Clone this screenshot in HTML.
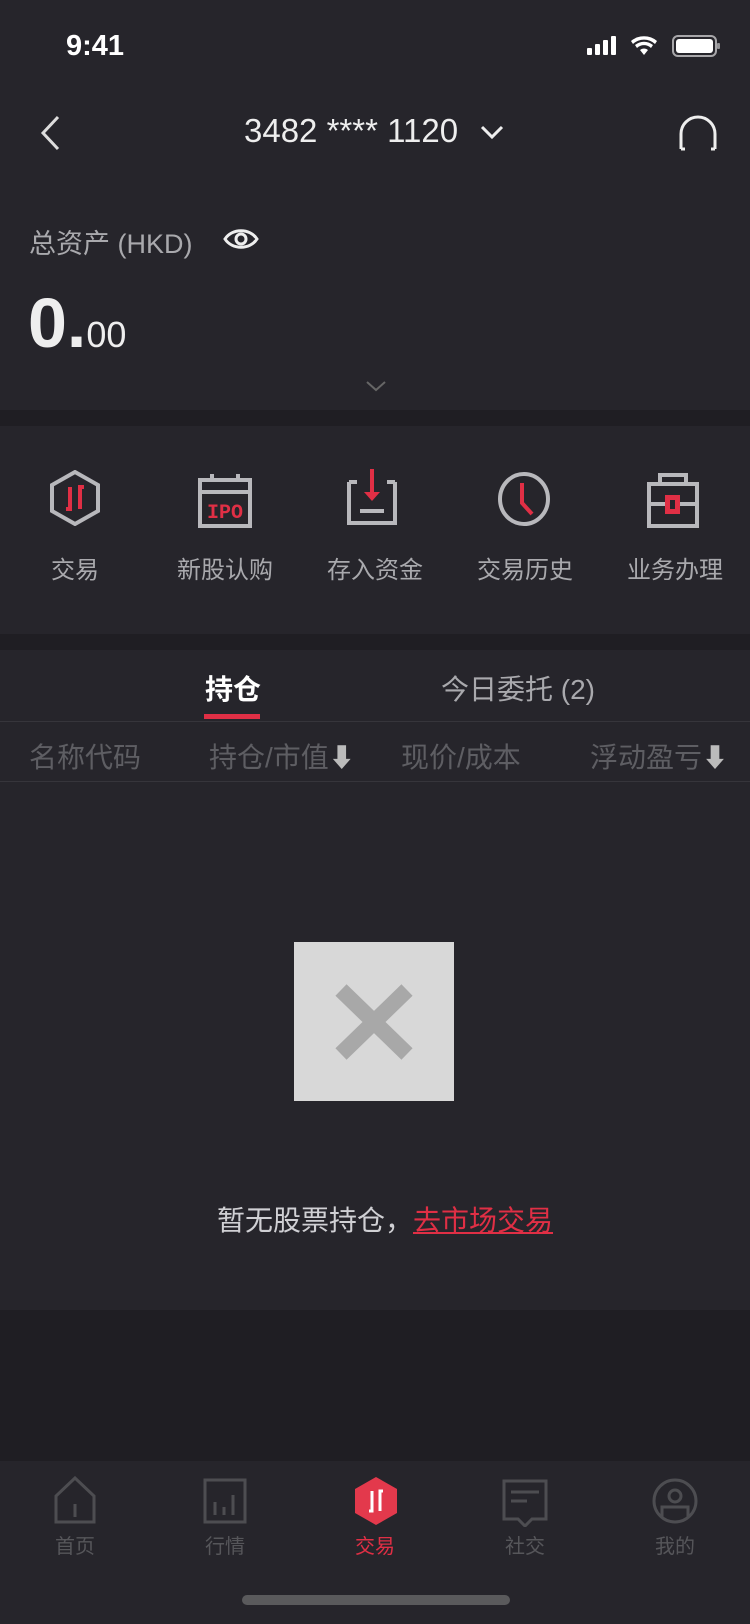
<!DOCTYPE html>
<html><head><meta charset="utf-8"><style>
*{margin:0;padding:0;box-sizing:border-box}
body{width:750px;height:1624px;background:#1f1e23;font-family:"Liberation Sans","Noto Sans CJK SC",sans-serif;position:relative;overflow:hidden;color:#ddd}
.a{position:absolute}
.panel{background:#26252b;position:absolute;left:0;width:750px}
.lbl{position:absolute;width:150px;text-align:center;font-size:24px;color:#a9a9ad}
.tl{position:absolute;width:150px;text-align:center;font-size:20px;color:#56565a}
</style></head><body>
<div class="panel" style="top:0;height:410px"></div>
<div class="panel" style="top:426px;height:208px"></div>
<div class="panel" style="top:650px;height:660px"></div>
<div class="panel" style="top:1461px;height:163px"></div>

<div class="a" style="left:66px;top:30px;font-size:29px;font-weight:bold;color:#fff">9:41</div>
<svg class="a" style="left:585px;top:34px" width="135" height="26">
<rect x="2" y="14" width="5" height="7" rx="1" fill="#fff"/><rect x="10" y="10" width="5" height="11" rx="1" fill="#fff"/><rect x="18" y="6" width="5" height="15" rx="1" fill="#fff"/><rect x="26" y="2" width="5" height="19" rx="1" fill="#fff"/>
<g transform="translate(12,0)"><path d="M47 21l4-5a6 6 0 0 0-8 0z M38 11a14 14 0 0 1 18 0l-2 3a10 10 0 0 0-14 0z M34 7a20 20 0 0 1 26 0l-2 3a16 16 0 0 0-22 0z" fill="#fff"/></g>
<rect x="88" y="2" width="43" height="20" rx="5" fill="none" stroke="#fff" stroke-width="2" opacity=".6"/><rect x="91" y="5" width="37" height="14" rx="3" fill="#fff"/><rect x="132" y="9" width="3" height="6" rx="1" fill="#fff" opacity=".5"/>
</svg>

<svg class="a" style="left:36px;top:114px" width="28" height="38"><path d="M22 3L7 19l15 16" fill="none" stroke="#ddd" stroke-width="3"/></svg>
<div class="a" style="left:244px;top:112px;font-size:33px;color:#eee">3482 **** 1120</div>
<svg class="a" style="left:480px;top:124px" width="24" height="16"><path d="M2 3l10 10 10-10" fill="none" stroke="#eee" stroke-width="3"/></svg>
<svg class="a" style="left:676px;top:113px" width="44" height="40"><path d="M5 36V21a17 17 0 0 1 34 0v15" fill="none" stroke="#eee" stroke-width="3"/><path d="M5 36h4 M39 36h-4" stroke="#eee" stroke-width="3"/></svg>

<div class="a" style="left:29px;top:222px;font-size:27px;color:#a9a9ad">总资产 (HKD)</div>
<svg class="a" style="left:222px;top:224px" width="38" height="30"><path d="M3 15C10 4 28 4 35 15C28 26 10 26 3 15z" fill="none" stroke="#eee" stroke-width="3"/><circle cx="19" cy="15" r="5" fill="none" stroke="#eee" stroke-width="3"/></svg>
<div class="a" style="left:28px;top:283px;color:#eee"><span style="font-size:70px;font-weight:bold">0.</span><span style="font-size:36px">00</span></div>
<svg class="a" style="left:365px;top:380px" width="22" height="12"><path d="M2 2l9 8 9-8" fill="none" stroke="#666" stroke-width="2"/></svg>

<svg class="a" style="left:49px;top:470px" width="52" height="56"><path d="M26 2L49 15v26L26 54 3 41V15z" fill="none" stroke="#b8b8bc" stroke-width="4"/><path d="M21 17v22h-4M31 39V17h4" fill="none" stroke="#e02f45" stroke-width="4"/></svg>
<svg class="a" style="left:198px;top:472px" width="54" height="56"><rect x="2" y="8" width="50" height="46" fill="none" stroke="#b8b8bc" stroke-width="4"/><path d="M2 20h50M14 2v8M40 2v8" stroke="#b8b8bc" stroke-width="4"/><text x="27" y="46" text-anchor="middle" font-size="20" font-weight="bold" fill="#e02f45" font-family="Liberation Mono">IPO</text></svg>
<svg class="a" style="left:345px;top:467px" width="54" height="60"><path d="M4 15v41h46V15" fill="none" stroke="#b8b8bc" stroke-width="4"/><path d="M4 15h8M50 15h-8M15 44h24" stroke="#b8b8bc" stroke-width="4"/><path d="M27 2v26" stroke="#e02f45" stroke-width="4"/><path d="M19 25h16l-8 9z" fill="#e02f45"/></svg>
<svg class="a" style="left:497px;top:471px" width="54" height="56"><ellipse cx="27" cy="28" rx="24" ry="25" fill="none" stroke="#b8b8bc" stroke-width="4"/><path d="M25 12v20l10 11" fill="none" stroke="#e02f45" stroke-width="4"/></svg>
<svg class="a" style="left:646px;top:472px" width="54" height="56"><rect x="3" y="12" width="48" height="42" fill="none" stroke="#b8b8bc" stroke-width="4"/><path d="M14 12V3h26v9M3 32h48" fill="none" stroke="#b8b8bc" stroke-width="4"/><rect x="19" y="23" width="15" height="19" fill="#e02f45"/><rect x="24" y="28" width="5" height="9" fill="#26252b"/></svg>
<div class="lbl" style="left:0;top:550px">交易</div>
<div class="lbl" style="left:150px;top:550px">新股认购</div>
<div class="lbl" style="left:300px;top:550px">存入资金</div>
<div class="lbl" style="left:450px;top:550px">交易历史</div>
<div class="lbl" style="left:600px;top:550px">业务办理</div>

<div class="a" style="left:205px;top:668px;font-size:28px;font-weight:bold;color:#fff">持仓</div>
<div class="a" style="left:204px;top:714px;width:56px;height:5px;background:#e02f45"></div>
<div class="a" style="left:441px;top:668px;font-size:28px;color:#a9a9ad">今日委托 (2)</div>
<div class="a" style="left:0;top:721px;width:750px;height:1px;background:#36353b"></div>
<div class="a" style="left:29px;top:736px;font-size:28px;color:#5e5e63">名称代码</div>
<div class="a" style="left:209px;top:736px;font-size:28px;color:#5e5e63">持仓/市值<span style="color:#bbb;font-size:26px">⬇</span></div>
<div class="a" style="left:401px;top:736px;font-size:28px;color:#5e5e63">现价/成本</div>
<div class="a" style="left:590px;top:736px;font-size:28px;color:#5e5e63">浮动盈亏<span style="color:#bbb;font-size:26px">⬇</span></div>
<div class="a" style="left:0;top:781px;width:750px;height:1px;background:#36353b"></div>

<div class="a" style="left:294px;top:942px;width:160px;height:159px;background:#d8d8d8"></div>
<svg class="a" style="left:333px;top:982px" width="82" height="80"><path d="M8 8l66 64M74 8L8 72" stroke="#a8a8a8" stroke-width="16"/></svg>
<div class="a" style="left:10px;top:1199px;width:750px;text-align:center;font-size:28px;color:#d0d0d4">暂无股票持仓，<span style="color:#e02f45;text-decoration:underline">去市场交易</span></div>

<svg class="a" style="left:54px;top:1476px" width="42" height="48"><path d="M2 46V20L21 2l19 18v26z" fill="none" stroke="#4d4d51" stroke-width="3"/><path d="M21 28v13" stroke="#4d4d51" stroke-width="3"/></svg>
<svg class="a" style="left:203px;top:1478px" width="44" height="46"><rect x="2" y="2" width="40" height="42" fill="none" stroke="#4d4d51" stroke-width="3"/><path d="M12 24v13M21 29v8M30 17v20" stroke="#4d4d51" stroke-width="3"/></svg>
<svg class="a" style="left:354px;top:1476px" width="44" height="50"><path d="M22 1l21 12v24L22 49 1 37V13z" fill="#e3394c"/><path d="M18 15v20h-3M26 35V15h3" fill="none" stroke="#fff" stroke-width="3"/></svg>
<svg class="a" style="left:502px;top:1479px" width="46" height="48"><path d="M2 2h42v38H30l-7 7-7-7H2z" fill="none" stroke="#4d4d51" stroke-width="3"/><path d="M9 13h28M9 22h16" stroke="#4d4d51" stroke-width="3"/></svg>
<svg class="a" style="left:652px;top:1478px" width="46" height="46"><circle cx="23" cy="23" r="21" fill="none" stroke="#4d4d51" stroke-width="3"/><circle cx="23" cy="18" r="6" fill="none" stroke="#4d4d51" stroke-width="3"/><path d="M10 40V29h26v11" fill="none" stroke="#4d4d51" stroke-width="3"/></svg>
<div class="tl" style="left:0;top:1530px">首页</div>
<div class="tl" style="left:150px;top:1530px">行情</div>
<div class="tl" style="left:300px;top:1530px;color:#e02f45">交易</div>
<div class="tl" style="left:450px;top:1530px">社交</div>
<div class="tl" style="left:600px;top:1530px">我的</div>
<div class="a" style="left:242px;top:1595px;width:268px;height:10px;border-radius:5px;background:#5a5a5c"></div>
</body></html>
